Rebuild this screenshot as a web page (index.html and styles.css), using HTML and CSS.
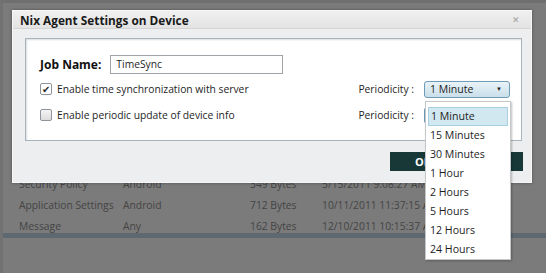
FILE: index.html
```html
<!DOCTYPE html>
<html lang="en">

<head>
    <meta charset="utf-8">
    <title>Nix Agent Settings on Device</title>
    <link rel="stylesheet" href="styles.css">
</head>

<body>
    <main id="app">
        <table id="jobs">
            <tr>
                <td class="c-name">Security Policy</td>
                <td class="c-os">Android</td>
                <td class="c-size">349 Bytes</td>
                <td class="c-date">5/15/2011 9:08:27 AM</td>
            </tr>
            <tr>
                <td class="c-name">Application Settings</td>
                <td class="c-os">Android</td>
                <td class="c-size">712 Bytes</td>
                <td class="c-date">10/11/2011 11:37:15 AM</td>
            </tr>
            <tr class="sidste">
                <td class="c-name">Message</td>
                <td class="c-os">Any</td>
                <td class="c-size">162 Bytes</td>
                <td class="c-date">12/10/2011 10:15:37 AM</td>
            </tr>
        </table>
        <div class="bar"></div>
    </main>

    <div id="dialog">
        <div class="titel">
            <span>Nix Agent Settings on Device</span>
            <span class="luk">&#x2715;</span>
        </div>
        <div class="panel">
            <div class="row job">
                <label class="jobnavn">Job Name:</label>
                <div class="input">TimeSync</div>
            </div>
            <div class="row">
                <div class="check">
                    <span class="box tjekket">&#x2714;</span>
                    <span>Enable time synchronization with server</span>
                </div>
                <div class="periode">
                    <span>Periodicity :</span>
                    <div class="select">
                        <span>1 Minute</span>
                        <span class="pil">&#x25BC;</span>
                    </div>
                </div>
            </div>
            <div class="row">
                <div class="check">
                    <span class="box"></span>
                    <span>Enable periodic update of device info</span>
                </div>
                <div class="periode">
                    <span>Periodicity :</span>
                    <div class="select tom"></div>
                </div>
            </div>
        </div>
        <div class="knapper">
            <button class="knap">OK</button>
            <button class="knap">Cancel</button>
        </div>
    </div>

    <ul id="liste">
        <li class="valgt">1 Minute</li>
        <li>15 Minutes</li>
        <li>30 Minutes</li>
        <li>1 Hour</li>
        <li>2 Hours</li>
        <li>5 Hours</li>
        <li>12 Hours</li>
        <li>24 Hours</li>
    </ul>
</body>

</html>
```

FILE: styles.css
```css
body {
    margin: 0;
    padding: 0;
    width: 546px;
    height: 273px;
    overflow: hidden;
    background-color: #7b7b7b;
    font-family: "Open Sans", sans-serif;
    font-size: 10.3px;
    color: #1e1e1e;
}

/************ App bag dialogen ************/

#app {
    padding-top: 170px;
    border-top: 3px solid #6f6f6f;
    border-left: 3px solid #727272;
    height: 100%;
    box-sizing: border-box;
}

#jobs {
    border-collapse: collapse;
    color: #444;
}

#jobs td {
    height: 21.5px;
    padding: 0;
    white-space: nowrap;
}

#jobs .sidste td {
    height: 17px;
    vertical-align: bottom;
}

.c-name {
    padding-left: 16px !important;
    width: 104px;
}

.c-os {
    width: 127px;
}

.c-size {
    width: 72px;
}

.bar {
    height: 5px;
    background-color: #5e6871;
}

/************ Dialog ************/

#dialog {
    position: absolute;
    left: 12px;
    top: 10px;
    width: 520px;
    height: 173px;
    box-sizing: border-box;
    background-color: #eceeef;
    border: 1px solid #f6f6f6;
    box-shadow: 0 0 3px rgba(0, 0, 0, 0.35);
}

.titel {
    height: 17px;
    display: flex;
    justify-content: space-between;
    align-items: center;
    padding: 0 11px 0 7px;
    background: linear-gradient(#f0f0f0, #e3e3e3);
    border-bottom: 1px solid #d4d4d4;
    font-weight: 700;
    font-size: 11.8px;
    color: #1a1a1a;
}

.luk {
    font-size: 9px;
    color: #a0a0a0;
    font-weight: 400;
}

.panel {
    margin: 9px 9px 0 12px;
    height: 103px;
    box-sizing: border-box;
    background-color: #fff;
    border: 1px solid #aab3bb;
    box-shadow: inset 1px 1px 2px #d8dde0;
    padding: 14px 11px 0 14px;
    display: grid;
    grid-template-rows: 23px 26px 26px;
}

.row {
    display: flex;
    justify-content: space-between;
    align-items: center;
}

.job {
    justify-content: flex-start;
    gap: 9px;
}

.jobnavn {
    font-family: "Noto Sans", sans-serif;
    font-weight: 700;
    font-size: 12px;
    color: #111;
}

.input {
    width: 173px;
    height: 19px;
    box-sizing: border-box;
    border: 1px solid #9ea4a8;
    padding: 1px 5px;
    line-height: 15px;
}

.check {
    display: flex;
    align-items: center;
    gap: 5px;
}

.box {
    width: 12px;
    height: 12px;
    box-sizing: border-box;
    border: 1px solid #8e9499;
    border-radius: 2px;
    background: linear-gradient(#f4f4f4, #dcdcdc);
    font-size: 10px;
    line-height: 10px;
    text-align: center;
    color: #2b2b2b;
}

.tjekket {
    background: #fff;
}

.periode {
    display: flex;
    align-items: center;
    gap: 10px;
}

.select {
    width: 86px;
    height: 17px;
    box-sizing: border-box;
    border: 1px solid #6f9bb6;
    border-radius: 3px;
    background: linear-gradient(#e9f3f8, #c9dfea);
    display: flex;
    justify-content: space-between;
    align-items: center;
    padding: 0 7px 0 5px;
    font-size: 10.5px;
}

.select.tom {
    background: #fff;
}

.pil {
    font-size: 6px;
}

.knapper {
    display: flex;
    justify-content: flex-end;
    gap: 3px;
    margin: 11px 8px 0 0;
}

.knap {
    height: 19px;
    width: 62px;
    border: 0;
    background-color: #183838;
    color: #fff;
    font-family: "Open Sans", sans-serif;
    font-size: 11px;
    font-weight: 700;
    padding: 0 0 0 4px;
}

.knap + .knap {
    width: 68px;
}

/************ Dropdown liste ************/

#liste {
    position: absolute;
    left: 425px;
    top: 101px;
    width: 86px;
    height: 159px;
    box-sizing: border-box;
    margin: 0;
    padding: 5px 2px;
    list-style: none;
    background-color: #fff;
    border: 1px solid #c4c8cb;
    box-shadow: 1px 1px 2px rgba(0, 0, 0, 0.25);
}

#liste li {
    height: 19px;
    line-height: 19px;
    padding-left: 2px;
    font-size: 10.6px;
}

#liste .valgt {
    background-color: #d2e8f1;
    border: 1px solid #a9d0e0;
    line-height: 17px;
    box-sizing: border-box;
}
```
